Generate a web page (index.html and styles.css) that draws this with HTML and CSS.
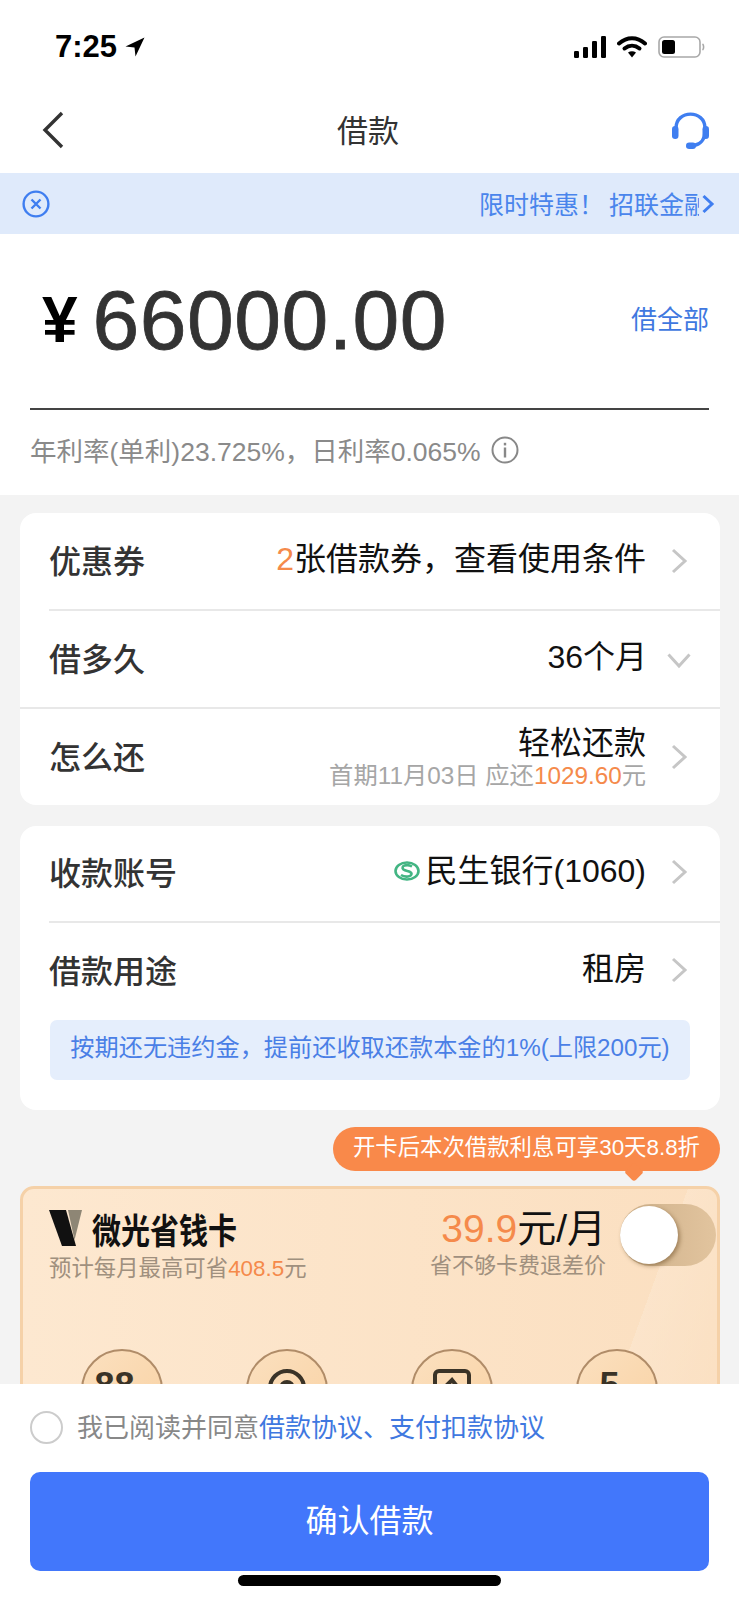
FILE: index.html
```html
<!DOCTYPE html>
<html>
<head>
  <meta charset="utf-8">
  <title>借款</title>
  <link rel="stylesheet" href="styles.css">
</head>
<body>
  <div class="status-bar">
    <div class="status-time">7:25
      <svg class="status-arrow" width="20" height="20" viewBox="0 0 20 20"><path d="M19.5 0.5 L0.5 9.5 L9.5 10.5 L10.5 19.5 Z" fill="#000"/></svg>
    </div>
    <div class="status-icons">
      <svg width="32" height="22" viewBox="0 0 32 22"><rect x="0" y="15" width="5" height="7" rx="1.2"/><rect x="9" y="11" width="5" height="11" rx="1.2"/><rect x="18" y="5" width="5" height="17" rx="1.2"/><rect x="27" y="0" width="5" height="22" rx="1.2"/></svg>
      <svg width="30" height="22" viewBox="0 0 30 22"><path d="M2 7.5 C10 0.5 20 0.5 28 7.5" fill="none" stroke="#000" stroke-width="4" stroke-linecap="round"/><path d="M7.5 12.5 C12 8.8 18 8.8 22.5 12.5" fill="none" stroke="#000" stroke-width="4" stroke-linecap="round"/><path d="M11 16.5 L15 21.5 L19 16.5 C16.5 14.8 13.5 14.8 11 16.5 Z"/></svg>
      <svg width="47" height="22" viewBox="0 0 47 22"><rect x="1" y="1" width="41" height="20" rx="5" fill="none" stroke="#a8a8a8" stroke-width="1.6"/><rect x="4" y="4" width="13" height="14" rx="2.5"/><path d="M44.5 8 C46 9 46 13 44.5 14" fill="none" stroke="#a8a8a8" stroke-width="1.6"/></svg>
    </div>
  </div>

  <div class="nav-bar">
    <svg width="22" height="38" viewBox="0 0 22 38"><path d="M20 2 L3 19 L20 36" fill="none" stroke="#333" stroke-width="3.4"/></svg>
    <div class="nav-title">借款</div>
    <svg width="37" height="38" viewBox="0 0 37 38"><path d="M4 20 V17 C4 -1.5 33 -1.5 33 17 V20 C33 29 28 33.5 22 34.5" fill="none" stroke="#3f7ef0" stroke-width="3.4"/><rect x="0" y="15" width="6.5" height="13" rx="3.2" fill="#3f7ef0"/><rect x="30.5" y="15" width="6.5" height="13" rx="3.2" fill="#3f7ef0"/><rect x="14" y="31.5" width="10" height="6.5" rx="3.2" fill="#3f7ef0"/></svg>
  </div>

  <div class="notice-bar">
    <svg width="28" height="28" viewBox="0 0 28 28"><circle cx="14" cy="14" r="12.4" fill="none" stroke="#3f7ef0" stroke-width="2.4"/><path d="M9.5 9.5 L18.5 18.5 M18.5 9.5 L9.5 18.5" stroke="#3f7ef0" stroke-width="2.4"/></svg>
    <div class="notice-scroll">限时特惠！ 招联金融新客专享</div>
    <svg width="14" height="22" viewBox="0 0 14 22"><path d="M2.5 3 L11 11 L2.5 19" fill="none" stroke="#3f7ef0" stroke-width="3"/></svg>
  </div>

  <div class="amount-box">
    <div class="amount-row">
      <div class="amount-value"><span class="amount-yen">¥</span><span class="amount-num">66000.00</span></div>
      <div class="amount-all">借全部</div>
    </div>
    <div class="amount-rate">年利率(单利)23.725%，日利率0.065%
      <svg width="28" height="28" viewBox="0 0 28 28"><circle cx="14" cy="14" r="12.5" fill="none" stroke="#888" stroke-width="2"/><rect x="12.8" y="11.5" width="2.4" height="10" fill="#888"/><rect x="12.8" y="6.8" width="2.4" height="2.6" fill="#888"/></svg>
    </div>
  </div>

  <div class="main">
    <div class="card">
      <div class="row">
        <div class="row-label">优惠券</div>
        <div class="row-value"><span class="orange">2</span>张借款券，查看使用条件</div>
        <svg class="chevron" width="17" height="26" viewBox="0 0 17 26"><path d="M2 2 L14 13 L2 24" fill="none" stroke="#c6c6c6" stroke-width="3"/></svg>
      </div>
      <div class="row row-line-full">
        <div class="row-label">借多久</div>
        <div class="row-value">36个月</div>
        <svg class="chevron-down" width="24" height="17" viewBox="0 0 24 17"><path d="M1.5 2.5 L12 14 L22.5 2.5" fill="none" stroke="#c6c6c6" stroke-width="3"/></svg>
      </div>
      <div class="row row-last">
        <div class="row-label">怎么还</div>
        <div class="row-value row-value-stack">轻松还款
          <div class="row-sub">首期11月03日 应还<span class="orange">1029.60</span>元</div>
        </div>
        <svg class="chevron" width="17" height="26" viewBox="0 0 17 26"><path d="M2 2 L14 13 L2 24" fill="none" stroke="#c6c6c6" stroke-width="3"/></svg>
      </div>
    </div>

    <div class="card card-bank">
      <div class="row">
        <div class="row-label">收款账号</div>
        <div class="row-value bank-value">
          <svg width="26" height="20" viewBox="0 0 26 20"><ellipse cx="13" cy="10" rx="11.5" ry="8.5" fill="none" stroke="#43b583" stroke-width="2.6"/><path d="M18 5.5 C13 2.5 6 5 9.5 8.5 C12 10.5 16.5 9.5 17.5 12.5 C18 16 11 16.5 7 14" fill="none" stroke="#43b583" stroke-width="2.6"/></svg>
          民生银行(1060)
        </div>
        <svg class="chevron" width="17" height="26" viewBox="0 0 17 26"><path d="M2 2 L14 13 L2 24" fill="none" stroke="#c6c6c6" stroke-width="3"/></svg>
      </div>
      <div class="row row-last">
        <div class="row-label">借款用途</div>
        <div class="row-value">租房</div>
        <svg class="chevron" width="17" height="26" viewBox="0 0 17 26"><path d="M2 2 L14 13 L2 24" fill="none" stroke="#c6c6c6" stroke-width="3"/></svg>
      </div>
      <div class="tip">按期还无违约金，提前还收取还款本金的1%(上限200元)</div>
    </div>

    <div class="bubble-wrap">
      <div class="bubble">开卡后本次借款利息可享30天8.8折</div>
    </div>

    <div class="vip-card">
      <div class="vip-head">
        <div class="vip-left">
          <div class="vip-logo">
            <svg width="34" height="36" viewBox="0 0 34 36"><path d="M0 0 H17 L27 36 H13 Z" fill="#111"/><path d="M19 0 H33 L25.5 30 Z" fill="#8e8675"/></svg>
            <span class="vip-name">微光省钱卡</span>
          </div>
          <div class="vip-sub">预计每月最高可省<span class="orange">408.5</span>元</div>
        </div>
        <div class="vip-price">
          <div class="vip-amount"><span class="orange">39.9</span>元/月</div>
          <div class="vip-refund">省不够卡费退差价</div>
        </div>
        <div class="toggle"><div class="toggle-knob"></div></div>
      </div>
      <div class="vip-perks">
        <div class="perk"><span class="perk-text">88<small>折</small></span></div>
        <div class="perk"><svg width="40" height="40" viewBox="0 0 40 40"><circle cx="20" cy="20" r="17" fill="none" stroke="#3a3327" stroke-width="4"/><circle cx="20" cy="20" r="6" fill="none" stroke="#3a3327" stroke-width="4"/></svg></div>
        <div class="perk"><svg width="40" height="40" viewBox="0 0 40 40"><rect x="3" y="3" width="34" height="34" rx="4" fill="none" stroke="#3a3327" stroke-width="4"/><path d="M10 22 L20 12 L28 22" fill="none" stroke="#3a3327" stroke-width="4"/></svg></div>
        <div class="perk"><span class="perk-text">5<small>元</small></span></div>
      </div>
    </div>
  </div>

  <div class="footer">
    <div class="agree">
      <span class="agree-radio"></span>
      <span class="agree-text">我已阅读并同意<span class="blue">借款协议、支付扣款协议</span></span>
    </div>
    <button type="button" class="confirm-btn">确认借款</button>
    <div class="home-bar"></div>
  </div>
</body>
</html>
```

FILE: styles.css
```css
* {
  box-sizing: border-box;
}

html, body {
  margin: 0;
  height: 1600px;
  overflow: hidden;
}

body {
  position: relative;
  width: 739px;
  background-color: #f3f3f3;
  color: #333;
  font-family: "Liberation Sans", "Noto Sans CJK SC", sans-serif;
}

.orange {
  color: #f58a4b;
}

.blue {
  color: #3f78e0;
}

/* top of the phone */
.status-bar {
  display: flex;
  justify-content: space-between;
  align-items: center;
  height: 94px;
  padding: 0 34px 0 55px;
  background-color: #fff;
}

.status-time {
  display: flex;
  align-items: center;
  gap: 8px;
  color: #000;
  font-size: 31px;
  font-weight: bold;
}

.status-icons {
  display: flex;
  align-items: center;
  gap: 11px;
}

.nav-bar {
  display: flex;
  justify-content: space-between;
  align-items: center;
  height: 79px;
  padding: 0 30px 7px 42px;
  background-color: #fff;
}

.nav-title {
  margin-bottom: 4px;
  font-size: 31px;
}

.notice-bar {
  display: flex;
  align-items: center;
  height: 61px;
  padding: 0 24px 0 22px;
  background-color: #dfeafb;
}

.notice-scroll {
  width: 220px;
  margin-left: auto;
  margin-right: 2px;
  margin-bottom: 2px;
  overflow: hidden;
  white-space: nowrap;
  word-spacing: -2px;
  color: #4a85ec;
  font-size: 25px;
}

/* amount */
.amount-box {
  height: 261px;
  padding: 0 30px;
  background-color: #fff;
}

.amount-row {
  display: flex;
  justify-content: space-between;
  align-items: center;
  height: 176px;
  padding-bottom: 2px;
  border-bottom: 2px solid #444;
}

.amount-value {
  display: flex;
  align-items: center;
  gap: 15px;
  padding-left: 12px;
}

.amount-yen {
  color: #000;
  font-size: 64px;
  font-weight: bold;
}

.amount-num {
  font-size: 84px;
  letter-spacing: 0.5px;
  -webkit-text-stroke: 0.8px #333;
}

.amount-all {
  margin-bottom: 5px;
  color: #3f78e0;
  font-size: 26px;
}

.amount-rate {
  display: flex;
  align-items: center;
  gap: 10px;
  height: 83px;
  padding-bottom: 4px;
  color: #8a8a8a;
  font-size: 26.5px;
}

/* cards */
.main {
  padding: 18px 19px 0 20px;
}

.card {
  border-radius: 16px;
  background-color: #fff;
  overflow: hidden;
}

.card-bank {
  margin-top: 21px;
}

.row {
  display: flex;
  align-items: center;
  height: 98px;
  margin-left: 29px;
  padding-right: 32px;
  border-bottom: 2px solid #e8e8e8;
}

.row-line-full {
  margin-left: 0;
  padding-left: 29px;
}

.row-last {
  height: 96px;
  border-bottom: 0;
}

.card-bank .row {
  height: 97px;
}

.card-bank .chevron {
  margin-bottom: 3px;
}

.row-label {
  flex: 1;
  margin-bottom: 5px;
  font-size: 32px;
  font-weight: 500;
}

.row-value {
  margin-bottom: 5px;
  color: #111;
  font-size: 32px;
  line-height: 38px;
  text-align: right;
}

.row-value-stack {
  margin-bottom: 0;
}

.row-sub {
  color: #a6a6a6;
  font-size: 24.3px;
  line-height: 28px;
}

.chevron {
  margin-left: 25px;
}

.chevron-down {
  margin: 2px -3px 0 20px;
}

.bank-value {
  display: flex;
  align-items: center;
  gap: 5px;
}

.tip {
  height: 60px;
  margin: 0 30px 30px;
  border-radius: 7px;
  background-color: #e5eefc;
  color: #4a7fe6;
  font-size: 24.2px;
  line-height: 56px;
  text-align: center;
  white-space: nowrap;
}

/* card offer */
.bubble-wrap {
  display: flex;
  justify-content: flex-end;
  margin-top: 17px;
}

.bubble {
  position: relative;
  height: 44px;
  padding: 0 20px;
  border-radius: 22px;
  background-color: #f9894a;
  color: #fff;
  font-size: 22.4px;
  line-height: 42px;
}

.bubble::after {
  content: "";
  position: absolute;
  right: 79px;
  bottom: -8px;
  width: 14px;
  height: 14px;
  border-radius: 3px;
  background-color: #f9894a;
  transform: rotate(45deg);
}

.vip-card {
  height: 300px;
  margin-top: 15px;
  border: 3px solid #f5d1a8;
  border-radius: 14px 14px 0 0;
  background: linear-gradient(110deg, rgba(255, 255, 255, 0) 83%, rgba(255, 255, 255, 0.15) 83%, rgba(255, 255, 255, 0) 100%), linear-gradient(90deg, #fde8d0, #fbdfc0);
}

.vip-head {
  display: flex;
  padding: 15px 1px 0 26px;
}

.vip-left {
  flex: 1;
}

.vip-logo {
  display: flex;
  align-items: center;
  gap: 9px;
  height: 42px;
  margin-top: 3px;
}

.vip-name {
  color: #111;
  font-size: 29px;
  font-weight: 700;
  transform: scaleY(1.2);
}

.vip-sub {
  margin-top: 5px;
  color: #a0907e;
  font-size: 22.4px;
  line-height: 30px;
}

.vip-price {
  text-align: right;
}

.vip-amount {
  color: #111;
  font-size: 39px;
  line-height: 50px;
}

.vip-refund {
  color: #a0907e;
  font-size: 22px;
  line-height: 24px;
}

.toggle {
  width: 96px;
  height: 62px;
  margin-left: 14px;
  border-radius: 31px;
  background: linear-gradient(90deg, #cdb08a, #e2c49e);
}

.toggle-knob {
  width: 58px;
  height: 58px;
  margin-top: 2px;
  border-radius: 50%;
  background-color: #fff;
  box-shadow: 2px 2px 4px rgba(90, 60, 20, 0.45);
}

.vip-perks {
  display: grid;
  grid-template-columns: repeat(4, 165px);
  padding: 65px 0 0 58px;
}

.perk {
  display: flex;
  justify-content: center;
  align-items: flex-start;
  width: 82px;
  height: 82px;
  padding-top: 17px;
  border: 2px solid #b08c68;
  border-radius: 50%;
  background: linear-gradient(135deg, #fbe0bf, #f9d2a4);
}

.perk-text {
  color: #3a3327;
  font-size: 36px;
  font-weight: bold;
  line-height: 36px;
}

.perk-text small {
  font-size: 15px;
  font-weight: normal;
}

/* fixed footer, sits over the offer card */
.footer {
  position: absolute;
  left: 0;
  bottom: 0;
  width: 739px;
  height: 216px;
  padding: 25px 30px 0;
  background-color: #fff;
}

.agree {
  display: flex;
  align-items: center;
  gap: 14px;
  height: 36px;
  color: #888;
  font-size: 26px;
}

.agree-radio {
  width: 33px;
  height: 33px;
  border: 2px solid #ccc;
  border-radius: 50%;
}

.agree-text {
  margin-bottom: 4px;
}

.confirm-btn {
  display: block;
  width: 679px;
  height: 99px;
  margin-top: 27px;
  padding-bottom: 8px;
  border: none;
  border-radius: 10px;
  background-color: #4277fb;
  color: #fff;
  font-family: inherit;
  font-size: 32px;
}

.home-bar {
  width: 263px;
  height: 11px;
  margin: 4px auto 0;
  border-radius: 6px;
  background-color: #000;
}
```
